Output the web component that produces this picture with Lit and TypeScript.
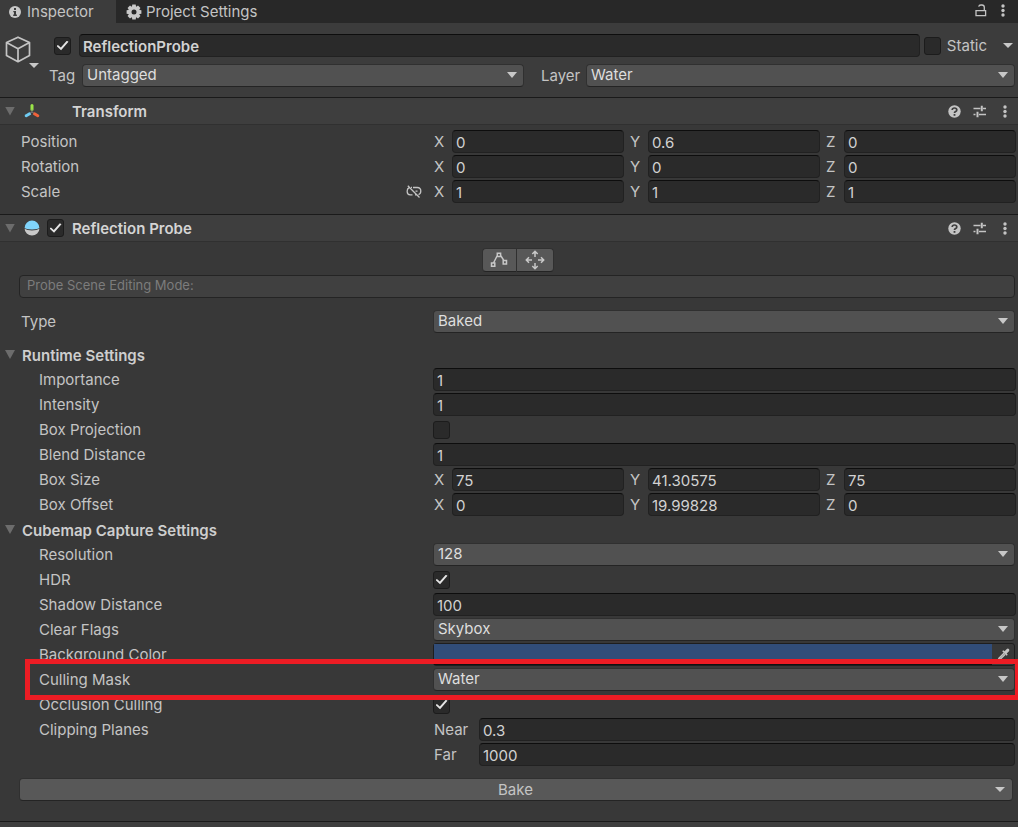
import { LitElement, html, css, svg, nothing, TemplateResult } from "lit";
import { customElement, property } from "lit/decorators.js";

const base = css`
  * { box-sizing: border-box; }
  :host { display: block; font: 15px/20px Inter, "Liberation Sans", sans-serif; font-optical-sizing: none; color: #c4c4c4; }
  input, select, button { font: inherit; font-optical-sizing: none; color: inherit; margin: 0; }
  svg { display: block; flex: none; }
  .field {
    display: block; width: 100%; min-width: 0; height: 23px; padding: 2px 3px 0;
    color: #d2d2d2; background: #2a2a2a; border: 1px solid #212121;
    border-top-color: #0d0d0d; border-radius: 4px; outline: none;
  }
  .field:focus { border-color: #3a79bb; }
  .check {
    appearance: none; display: grid; place-items: center; flex: none; width: 17px; height: 18px;
    background: #2a2a2a; border: 1px solid #1c1c1c; border-radius: 3px;
  }
  .check:checked::before {
    content: ""; width: 12px; height: 10px; background: #e4e4e4;
    clip-path: polygon(0 56%, 12% 44%, 36% 70%, 86% 2%, 100% 12%, 38% 98%);
  }
  .icon-button { display: grid; place-items: center; padding: 0; border: 0; background: none; color: #c4c4c4; }
`;

const dots = html`<svg width="4" height="13" viewBox="0 0 4 13" fill="currentColor" aria-hidden="true">
  <circle cx="2" cy="2" r="1.7"/><circle cx="2" cy="6.5" r="1.7"/><circle cx="2" cy="11" r="1.7"/></svg>`;

const infoIcon = html`<svg width="12" height="12" viewBox="0 0 12 12" aria-hidden="true">
  <circle cx="6" cy="6" r="6" fill="#c8c8c8"/>
  <path d="M5 2h2v2H5zM4.3 5H7v3.6h.9V10H4.2V8.600H5V6.200h-.7z" fill="#3c3c3c"/></svg>`;

const gearTeeth = [0, 45, 90, 135, 180, 225, 270, 315];
const gearIcon = html`<svg width="16" height="16" viewBox="0 0 16 16" aria-hidden="true">
  <circle cx="8" cy="8" r="4.100" fill="none" stroke="#c8c8c8" stroke-width="3.200"/>
  ${gearTeeth.map((a) => svg`<path d="M6.300.6h3.400l.5 3h-4.400z" fill="#c8c8c8" transform="rotate(${a} 8 8)"/>`)}</svg>`;

const lockIcon = html`<svg width="12" height="13" viewBox="0 0 12 13" fill="none" stroke="currentColor" stroke-width="1.300" aria-hidden="true">
  <path d="M1 6.700h9.600v5H1zM9.300 6.700V3.300Q9.300 1 7 1H6Q4 1 3.700 2.700"/></svg>`;

const cubeIcon = html`<svg width="26" height="27" viewBox="0 0 26 27" fill="none" stroke="#c4c4c4" stroke-width="1.700" stroke-linejoin="round" aria-hidden="true">
  <path d="M13 1.200 24.500 6.600v13L13 25.700 1.500 19.600v-13zM1.500 6.600 13 12.700l11.500-6.100M13 12.700v13"/></svg>`;

const transformIcon = html`<svg width="16" height="16" viewBox="0 0 16 16" fill="none" stroke-width="3" stroke-linecap="round" aria-hidden="true">
  <path d="M8 2.500v4" stroke="#9be548"/><path d="M5.600 10.800 2.200 12.800" stroke="#6fcbf2"/>
  <path d="M10.400 10.800l3.400 2" stroke="#f0623a"/><path d="M8 7v2L6.500 10M8 9l1.500 1" stroke="#777" stroke-width="1"/></svg>`;

const probeIcon = html`<svg width="16" height="16" viewBox="0 0 16 16" aria-hidden="true">
  <path d="M.6 8A7.400 7.400 0 0 1 15.400 8Q14 9.400 8 9.400T.6 8z" fill="#80d4fb"/>
  <path d="M.6 8.800Q3 10.600 8 10.600t7.400-1.800A7.400 6.600 0 0 1 .6 8.800z" fill="#c9c9c9"/></svg>`;

const helpIcon = html`<svg width="13" height="13" viewBox="0 0 13 13" aria-hidden="true">
  <circle cx="6.500" cy="6.500" r="6.200" fill="#c4c4c4"/>
  <path d="M4.200 5Q4.300 3 6.500 3t2.300 1.900Q8.800 6 7.300 6.700q-.8.4-.8 1.200" fill="none" stroke="#3e3e3e" stroke-width="1.700"/>
  <path d="M5.600 9h1.800v1.800H5.600z" fill="#3e3e3e"/></svg>`;

const presetIcon = html`<svg width="13" height="13" viewBox="0 0 13 13" fill="none" stroke="currentColor" aria-hidden="true">
  <path d="M.5 3.500h7M10 3.500h3M.5 9.500h2M6 9.500h7" stroke-width="1.400"/><path d="M8.800.8v5.400M4.500 6.800v5.400" stroke-width="2"/></svg>`;

const unlinkIcon = html`<svg width="16" height="14" viewBox="0 0 16 14" fill="none" stroke="currentColor" stroke-width="1.300" aria-hidden="true">
  <path d="M3.200 2.600A3.600 3.600 0 0 0 1.200 6v.8Q1.200 9.800 4.200 9.800H6.500M7 2.500h4.300q3.500 0 3.500 3.500 0 2.800-2.300 3.600M5 2.300h1M9 9.800h1.500M1.800.8 13.500 12.500M9.500 6.200h2"/></svg>`;

const boxEditIcon = html`<svg width="18" height="16" viewBox="0 0 18 16" fill="none" stroke="currentColor" stroke-width="1.500" aria-hidden="true">
  <path d="M1.500 11h3.300v3.300H1.500zM7.300 1.200h3.300v3.300H7.300zM13.200 8.600h3.300v3.300h-3.300zM3.500 11 7.300 3.500M10.600 3.500l3.400 5.100"/></svg>`;

const moveIcon = html`<svg width="20" height="20" viewBox="0 0 20 20" fill="none" stroke="currentColor" stroke-width="1.500" aria-hidden="true">
  <path d="M10 7V1.500M7.300 4 10 1.300 12.700 4M10 13v5.500M7.300 16l2.700 2.700 2.700-2.700M7 10H1.500M4 7.300 1.300 10 4 12.700M13 10h5.500M16 7.300l2.700 2.700-2.700 2.700"/></svg>`;

const dropperIcon = html`<svg width="14" height="14" viewBox="0 0 14 14" aria-hidden="true">
  <path d="M8.200 5 3 10.200 2 12.400l2-.9L9.300 6.300" fill="none" stroke="#c4c4c4" stroke-width="1.400"/>
  <path d="M6.200 3.300 7.300 2.300l1.300 1L10.800.9Q12 .2 12.900 1.100t.1 2.100l-2.300 2.200 1 1.300-1 1.100z" fill="#c4c4c4"/></svg>`;

@customElement("ui-dropdown")
class UiDropdown extends LitElement {
  @property() value = "";
  @property() label = "";
  static styles = [base, css`
    .wrap { position: relative; }
    select {
      appearance: none; display: block; width: 100%; height: 23px; padding: 0 24px 1px 4px;
      color: #dedede; background: #515151; border: 1px solid #303030;
      border-bottom-color: #242424; border-radius: 4px; outline: none; line-height: 20px;
    }
    .arrow {
      position: absolute; right: 7px; top: 8px; width: 10px; height: 6px; pointer-events: none;
      background: #c8c8c8; clip-path: polygon(0 0, 100% 0, 50% 100%);
    }
  `];
  render() {
    return html`<div class="wrap"><select aria-label=${this.label}><option>${this.value}</option></select><span class="arrow"></span></div>`;
  }
}

@customElement("vector-field")
class VectorField extends LitElement {
  @property({ attribute: false }) values: string[] = [];
  static styles = [base, css`
    .axes { display: grid; grid-template-columns: repeat(3, minmax(0, 1fr)); gap: 5px; }
    label { display: grid; grid-template-columns: 19px minmax(0, 1fr); line-height: 23px; }
    .axis { padding-left: 1px; }
  `];
  render() {
    return html`<div class="axes">${["X", "Y", "Z"].map((axis, i) => html`
      <label><span class="axis">${axis}</span><input class="field" .value=${this.values[i]} /></label>`)}</div>`;
  }
}

@customElement("component-header")
class ComponentHeader extends LitElement {
  @property() name = "";
  @property({ type: Boolean }) toggle = false;
  @property({ attribute: false }) icon: TemplateResult | typeof nothing = nothing;
  static styles = [base, css`
    header {
      display: flex; align-items: center; height: 28px; padding: 0 11px 0 5px;
      background: #3e3e3e; border-top: 1px solid #1a1a1a; border-bottom: 1px solid #303030;
    }
    .fold { width: 10px; height: 9px; padding: 0; border: 0; background: #6c6c6c; clip-path: polygon(0 0, 100% 0, 50% 100%); }
    .icon { margin-left: 9px; }
    .slot { width: 32px; padding-left: 7px; }
    h2 { flex: 1; margin: 0; padding-top: 2px; font-size: 15px; font-weight: 600; color: #d4d4d4; }
    .actions { display: flex; align-items: center; gap: 17px; }
    .actions .preset { margin-left: -5px; }
  `];
  render() {
    return html`<header>
      <button class="fold" aria-label="Collapse ${this.name}"></button>
      <span class="icon">${this.icon}</span>
      <span class="slot">${this.toggle ? html`<input class="check" type="checkbox" checked aria-label="Enable ${this.name}" />` : nothing}</span>
      <h2>${this.name}</h2>
      <div class="actions">
        <button class="icon-button" aria-label="Help">${helpIcon}</button>
        <button class="icon-button preset" aria-label="Presets">${presetIcon}</button>
        <button class="icon-button" aria-label="More">${dots}</button>
      </div>
    </header>`;
  }
}

type Row = {
  label: string;
  kind: "text" | "select" | "check" | "vector" | "color";
  value?: string;
  on?: boolean;
  values?: string[];
  marked?: boolean;
  unlinked?: boolean;
};

const transformRows: Row[] = [
  { label: "Position", kind: "vector", values: ["0", "0.6", "0"] },
  { label: "Rotation", kind: "vector", values: ["0", "0", "0"] },
  { label: "Scale", kind: "vector", values: ["1", "1", "1"], unlinked: true },
];
const runtimeRows: Row[] = [
  { label: "Importance", kind: "text", value: "1" },
  { label: "Intensity", kind: "text", value: "1" },
  { label: "Box Projection", kind: "check", on: false },
  { label: "Blend Distance", kind: "text", value: "1" },
  { label: "Box Size", kind: "vector", values: ["75", "41.30575", "75"] },
  { label: "Box Offset", kind: "vector", values: ["0", "19.99828", "0"] },
];
const captureRows: Row[] = [
  { label: "Resolution", kind: "select", value: "128" },
  { label: "HDR", kind: "check", on: true },
  { label: "Shadow Distance", kind: "text", value: "100" },
  { label: "Clear Flags", kind: "select", value: "Skybox" },
  { label: "Background Color", kind: "color", value: "#314d79" },
  { label: "Culling Mask", kind: "select", value: "Water", marked: true },
  { label: "Occlusion Culling", kind: "check", on: true },
];

@customElement("app-root")
class AppRoot extends LitElement {
  static styles = [base, css`
    :host { min-height: 100vh; background: #383838; overflow: hidden; }
    .tabs { display: flex; height: 23px; background: #282828; }
    .tab { display: flex; align-items: center; gap: 6px; height: 23px; padding: 0 0 0 9px; border: 0; background: none; color: #c4c4c4; }
    .tab.active { width: 116px; background: #3c3c3c; }
    .tab.rest { gap: 4px; padding-left: 10px; }
    .tab-actions { display: flex; align-items: center; gap: 14px; margin-left: auto; padding: 0 13px 2px 0; }
    .object { display: grid; grid-template-columns: 49px minmax(0, 1fr); height: 74px; padding: 11px 3px 0 0; background: #3c3c3c; }
    .object-icon { display: flex; align-items: flex-start; height: 36px; padding: 2px 0 0 5px; }
    .caret { display: inline-block; flex: none; width: 10px; height: 5px; background: #c8c8c8; clip-path: polygon(0 0, 100% 0, 50% 100%); }
    .object-icon .caret { align-self: flex-end; margin: 0 0 2px -2px; }
    .lines { display: grid; align-content: start; gap: 7px; }
    .line { display: flex; align-items: center; height: 23px; }
    .line .lead { margin: 0 8px 0 5px; }
    .line .name { flex: 1; padding: 2px 3px 0; font-weight: 600; }
    .static { display: flex; align-items: center; gap: 6px; margin-left: 4px; }
    .static-menu { width: 10px; margin: 0 2px 0 16px; }
    .pair { display: grid; grid-template-columns: 33px minmax(0, 442fr) 62px minmax(0, 429fr); line-height: 23px; }
    .pair .layer { padding-left: 17px; }
    .rows { display: grid; gap: 2px; padding-right: 2px; }
    .transform { padding-top: 5px; padding-bottom: 11px; }
    .row { position: relative; display: grid; grid-template-columns: minmax(0, 433fr) minmax(0, 583fr); height: 23px; line-height: 23px; }
    .name-cell { display: flex; align-items: center; justify-content: space-between; padding-left: 21px; }
    .deep .name-cell { padding-left: 39px; }
    .link { margin-right: 11px; }
    .box { display: flex; align-items: center; }
    .dropdown { padding-right: 1px; }
    .marker { position: absolute; left: 25px; right: -4px; top: -9px; bottom: -9px; border: 5px solid #ed1c24; pointer-events: none; z-index: 1; }
    .color { display: grid; grid-template-columns: minmax(0, 1fr) 22px; margin-right: 1px; border: 1px solid #1e1e1e; border-radius: 3px; }
    .swatch { appearance: none; display: block; width: 100%; height: 21px; padding: 0 0 2px; border: 0; background: #111; }
    .swatch::-webkit-color-swatch-wrapper { padding: 0; }
    .swatch::-webkit-color-swatch { border: 0; border-radius: 0; }
    .modes { display: flex; justify-content: center; padding: 6px 0 3px 17px; }
    .mode { display: grid; place-items: center; width: 38px; height: 24px; padding: 0; background: #585858; border: 1px solid #303030; border-bottom-color: #242424; border-radius: 0 4px 4px 0; color: #c8c8c8; }
    .mode:first-child { width: 34px; border-right: 0; border-radius: 4px 0 0 4px; }
    .notice { height: 23px; margin: 0 3px 12px 19px; padding: 0 7px; background: #404040; border: 1px solid #242424; border-radius: 4px; font-size: 13px; line-height: 19px; color: #7c7c7c; }
    .group { display: flex; align-items: center; gap: 7px; height: 27px; margin: 0; padding: 2px 0 0 5px; font-size: 15px; font-weight: 600; color: #cecece; }
    .group.first { margin-top: 8px; }
    .group-fold { width: 10px; height: 9px; padding: 0; margin-bottom: 2px; border: 0; background: #6c6c6c; clip-path: polygon(0 0, 100% 0, 50% 100%); }
    .planes { display: grid; grid-template-columns: minmax(0, 433fr) minmax(0, 583fr); padding: 2px 2px 0 0; line-height: 23px; }
    .planes .title { padding-left: 39px; }
    .plane { display: grid; grid-template-columns: 46px minmax(0, 1fr); padding: 0 1px 0 0; }
    .plane span { padding-left: 1px; }
    .plane + .plane { margin-top: 2px; }
    .bake { display: flex; align-items: center; height: 23px; margin: 12px 5px 20px 19px; padding: 0 7px 0 16px; width: calc(100% - 24px); background: #585858; border: 1px solid #303030; border-bottom-color: #242424; border-radius: 4px; }
    .bake-text { flex: 1; text-align: center; }
    .foot { height: 6px; border-top: 1px solid #1a1a1a; background: #3e3e3e; }
  `];

  private control(row: Row) {
    switch (row.kind) {
      case "text": return html`<input class="field" aria-label=${row.label} .value=${row.value ?? ""} />`;
      case "select": return html`<ui-dropdown class="dropdown" .label=${row.label} .value=${row.value ?? ""}></ui-dropdown>`;
      case "check": return html`<div class="box"><input class="check" type="checkbox" aria-label=${row.label} .checked=${row.on ?? false} /></div>`;
      case "vector": return html`<vector-field .values=${row.values ?? []}></vector-field>`;
      case "color": return html`<div class="color"><input class="swatch" type="color" aria-label=${row.label} .value=${row.value ?? ""} />
        <button class="icon-button" aria-label="Pick color">${dropperIcon}</button></div>`;
    }
  }

  private row(row: Row) {
    return html`<div class="row"><div class="name-cell"><span>${row.label}</span>
      ${row.unlinked ? html`<button class="icon-button link" aria-label="Constrain proportions">${unlinkIcon}</button>` : nothing}</div>
      ${this.control(row)}${row.marked ? html`<div class="marker"></div>` : nothing}</div>`;
  }

  private group(title: string, first = false) {
    return html`<h3 class="group ${first ? "first" : ""}"><button class="group-fold" aria-label="Collapse ${title}"></button>${title}</h3>`;
  }

  render() {
    return html`
      <nav class="tabs">
        <button class="tab active">${infoIcon}Inspector</button>
        <button class="tab rest">${gearIcon}Project Settings</button>
        <div class="tab-actions">
          <button class="icon-button" aria-label="Lock">${lockIcon}</button>
          <button class="icon-button" aria-label="Menu">${dots}</button>
        </div>
      </nav>
      <section class="object">
        <div class="object-icon">${cubeIcon}<span class="caret"></span></div>
        <div class="lines">
          <div class="line">
            <input class="check lead" type="checkbox" checked aria-label="Active" />
            <input class="field name" aria-label="Name" .value=${"ReflectionProbe"} />
            <label class="static"><input class="check" type="checkbox" />Static</label>
            <button class="icon-button static-menu" aria-label="Static options"><span class="caret"></span></button>
          </div>
          <div class="pair">
            <span>Tag</span><ui-dropdown .label=${"Tag"} .value=${"Untagged"}></ui-dropdown>
            <span class="layer">Layer</span><ui-dropdown .label=${"Layer"} .value=${"Water"}></ui-dropdown>
          </div>
        </div>
      </section>

      <component-header .name=${"Transform"} .icon=${transformIcon}></component-header>
      <section class="rows transform">${transformRows.map((r) => this.row(r))}</section>

      <component-header .name=${"Reflection Probe"} .icon=${probeIcon} .toggle=${true}></component-header>
      <div class="modes">
        <button class="mode" aria-label="Edit bounds">${boxEditIcon}</button>
        <button class="mode" aria-label="Move origin">${moveIcon}</button>
      </div>
      <div class="notice">Probe Scene Editing Mode:</div>
      <section class="rows">${this.row({ label: "Type", kind: "select", value: "Baked" })}</section>
      ${this.group("Runtime Settings", true)}
      <section class="rows deep">${runtimeRows.map((r) => this.row(r))}</section>
      ${this.group("Cubemap Capture Settings")}
      <section class="rows deep">${captureRows.map((r) => this.row(r))}</section>
      <section class="planes">
        <span class="title">Clipping Planes</span>
        <div>
          <label class="plane"><span>Near</span><input class="field" .value=${"0.3"} /></label>
          <label class="plane"><span>Far</span><input class="field" .value=${"1000"} /></label>
        </div>
      </section>
      <button class="bake"><span class="bake-text">Bake</span><span class="caret"></span></button>
      <div class="foot"></div>
    `;
  }
}
